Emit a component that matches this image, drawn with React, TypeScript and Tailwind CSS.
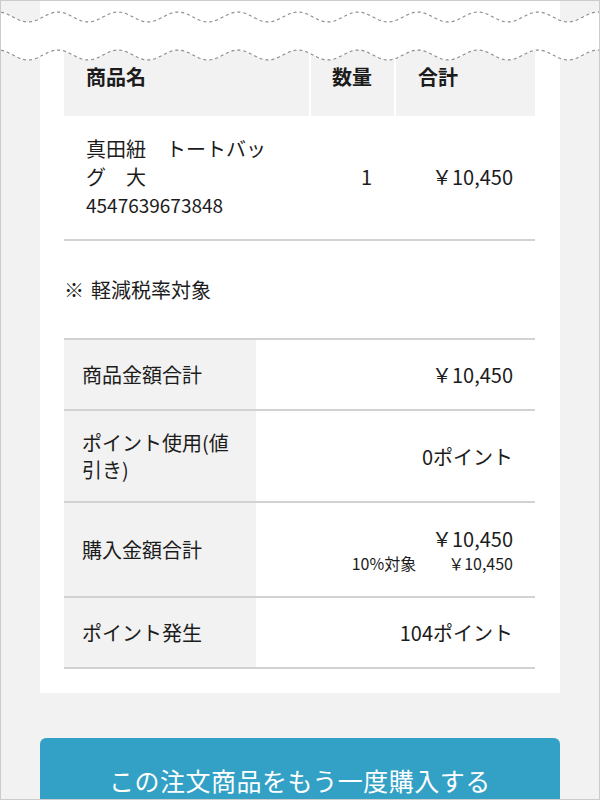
import React from "react";

// Torn-paper style band across the top: two dashed sine waves with white between.
function WaveBand() {
  const line = (c: number) => {
    const pts: string[] = [];
    for (let x = 0; x <= 600; x += 2) {
      const y = c - 5 * Math.cos((2 * Math.PI * (x - 57)) / 60);
      pts.push(`${x},${y.toFixed(2)}`);
    }
    return pts;
  };
  const top = line(16);
  const bottom = line(54);
  const fill = `M${top.join(" L")} L${[...bottom].reverse().join(" L")} Z`;
  return (
    <svg
      className="absolute left-0 top-0"
      width="600"
      height="66"
      viewBox="0 0 600 66"
    >
      <path d={fill} fill="#ffffff" />
      <path
        d={`M${top.join(" L")}`}
        fill="none"
        stroke="#8c8c8c"
        strokeWidth="1.2"
        strokeDasharray="3 3"
      />
      <path
        d={`M${bottom.join(" L")}`}
        fill="none"
        stroke="#8c8c8c"
        strokeWidth="1.2"
        strokeDasharray="3 3"
      />
    </svg>
  );
}

// Row heights include the 2px bottom border.
const summary = [
  { label: <>商品金額合計</>, value: <>￥10,450</>, h: "h-[71px]" },
  { label: <>ポイント使用(値<br />引き)</>, value: <>0ポイント</>, h: "h-[92px]" },
  {
    label: <>購入金額合計</>,
    value: (
      <div className="flex flex-col items-end">
        <span className="text-[20px] leading-[26px]">￥10,450</span>
        <span className="flex gap-[32px] text-[16px] leading-[22px]">
          <span>10%対象</span>
          <span>￥10,450</span>
        </span>
      </div>
    ),
    h: "h-[95px]",
  },
  { label: <>ポイント発生</>, value: <>104ポイント</>, h: "h-[71px]" },
];

export default function App() {
  return (
    <div
      className="relative h-[800px] w-[600px] overflow-hidden border border-[#cccccc] bg-[#f2f2f2] text-[#1c1c1c]"
      style={{ fontFamily: '"Noto Sans CJK JP", "Noto Sans", sans-serif' }}
    >
      <div className="px-[39px]">
        {/* ─── Order card ─── */}
        <div className="bg-white pb-[24px] pl-[24px] pr-[25px] pt-[40px]">
          {/* Item table header */}
          <div className="grid h-[75px] grid-cols-[245px_83px_139px] gap-x-[2px] text-[20px] font-bold">
            <div className="flex items-center bg-[#f2f2f2] pb-[3px] pl-[22px]">商品名</div>
            <div className="flex items-center bg-[#f2f2f2] pb-[3px] pl-[21px]">数量</div>
            <div className="flex items-center bg-[#f2f2f2] pb-[3px] pl-[22px]">合計</div>
          </div>

          {/* Item row */}
          <div className="grid grid-cols-[245px_83px_139px] items-center gap-x-[2px] border-b-2 border-[#d2d2d2] pb-[20px] pt-[19px] text-[20px] leading-[28px]">
            <div className="pl-[22px]">
              <div>
                真田紐　トートバッ
                <br />
                グ　大
              </div>
              <div className="text-[19px]">4547639673848</div>
            </div>
            <div className="pr-[22px] text-right">1</div>
            <div className="pr-[22px] text-right">￥10,450</div>
          </div>

          <p className="mb-[34px] mt-[35px] text-[20px] leading-[28px]">
            <span className="mr-[7px]">※</span>軽減税率対象
          </p>

          {/* Summary table */}
          <div className="border-t-2 border-[#d2d2d2] text-[20px] leading-[27px]">
            {summary.map((r, i) => (
              <div
                key={i}
                className={`grid grid-cols-[192px_1fr] border-b-2 border-[#d2d2d2] ${r.h}`}
              >
                <div className="flex items-center bg-[#f2f2f2] pl-[18px]">
                  <div>{r.label}</div>
                </div>
                <div className="flex items-center justify-end pr-[22px] text-right">
                  {r.value}
                </div>
              </div>
            ))}
          </div>
        </div>

        {/* ─── Reorder button ─── */}
        <button className="mt-[45px] flex h-[86px] w-full items-center justify-center rounded-[6px] bg-[#32a1c5] text-[25px] tracking-[0.5px] text-white">
          この注文商品をもう一度購入する
        </button>
      </div>

      <WaveBand />
    </div>
  );
}
